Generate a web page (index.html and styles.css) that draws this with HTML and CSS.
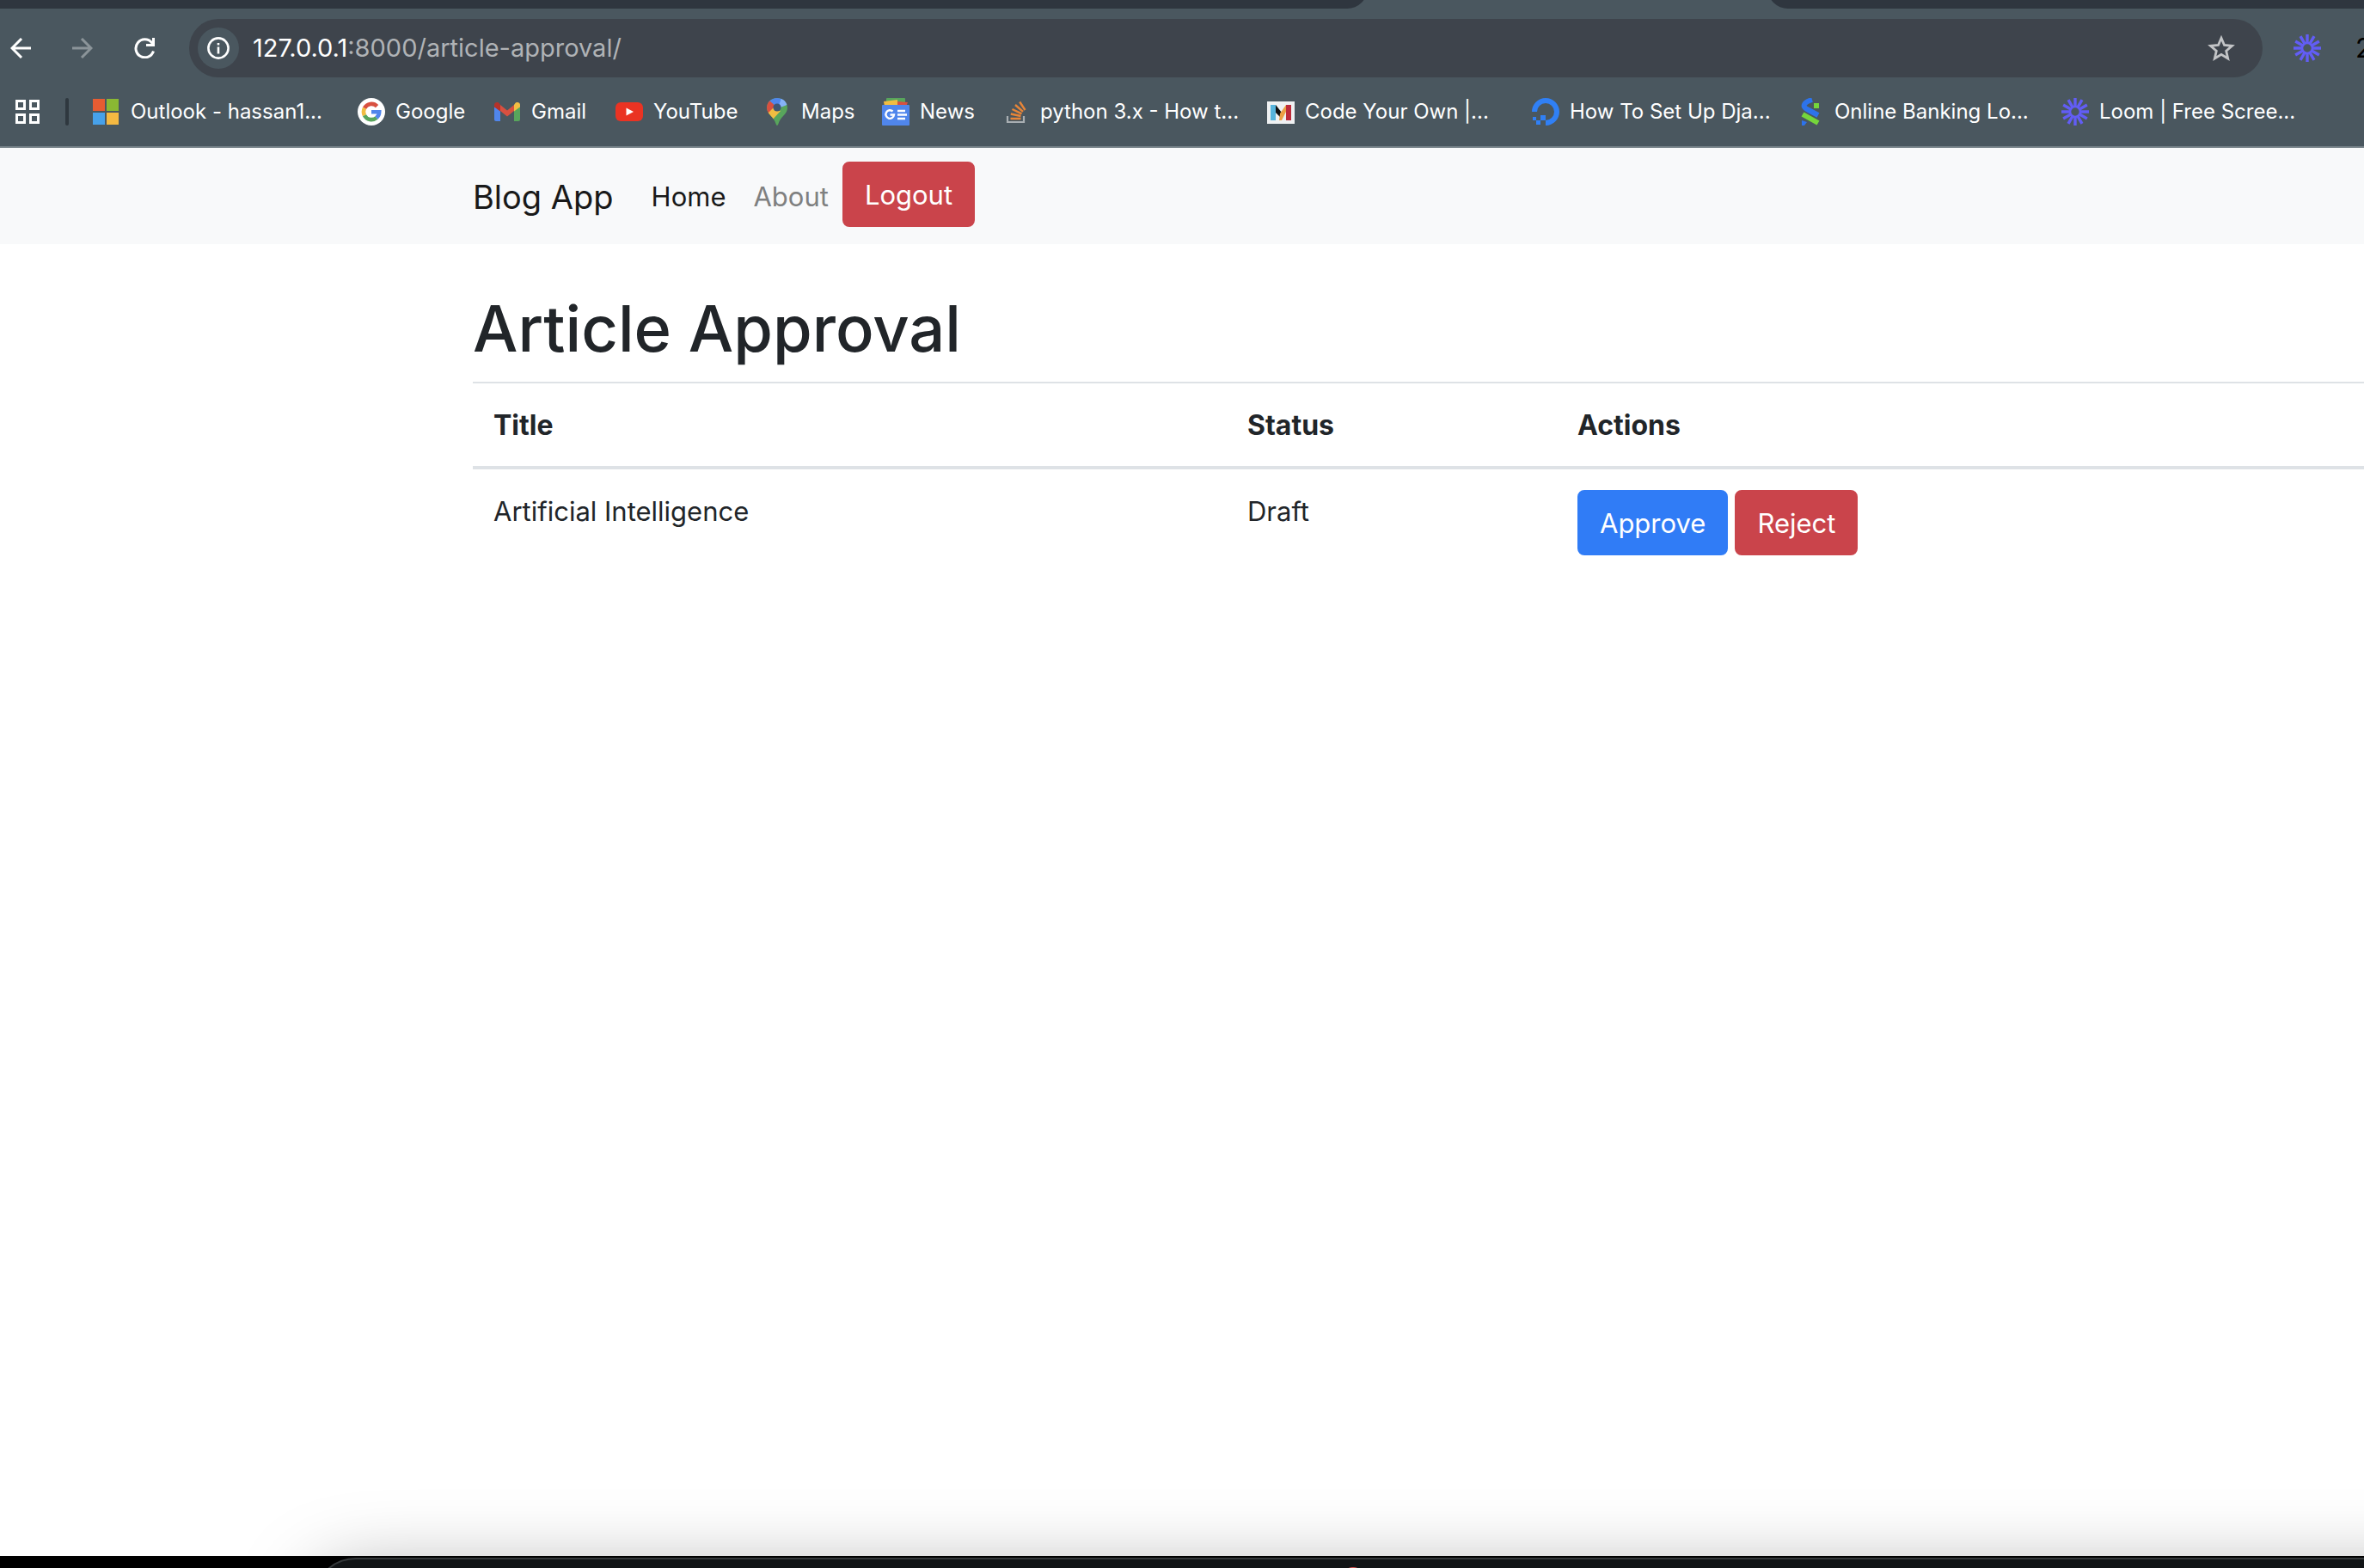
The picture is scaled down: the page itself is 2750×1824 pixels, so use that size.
FILE: index.html
```html
<!DOCTYPE html>
<html lang="en">
<head>
<meta charset="utf-8">
<title>Article Approval</title>
<link rel="stylesheet" href="styles.css">
</head>
<body>
<svg class="defs" aria-hidden="true">
  <symbol id="loom" viewBox="0 0 32 32">
    <g stroke="#625df5" stroke-width="3.4">
      <path id="ray" d="M16 0V11M16 21V32"/>
      <use href="#ray" transform="rotate(30 16 16)"/>
      <use href="#ray" transform="rotate(60 16 16)"/>
      <use href="#ray" transform="rotate(90 16 16)"/>
      <use href="#ray" transform="rotate(120 16 16)"/>
      <use href="#ray" transform="rotate(150 16 16)"/>
    </g>
    <circle cx="16" cy="16" r="6" fill="none" stroke="#625df5" stroke-width="2.6"/>
  </symbol>
</svg>
<header class="browser">
  <div class="tabs">
    <div class="tab-left"></div>
    <div></div>
    <div class="tab-right"></div>
  </div>
  <div class="toolbar">
    <div class="controls">
      <button class="tool" aria-label="Back"><svg width="24" height="24" viewBox="0 0 24 24" fill="none" stroke="#fff" stroke-width="3"><path d="M24 12H2M13 1L2 12L13 23"/></svg></button>
      <button class="tool" aria-label="Forward"><svg width="24" height="24" viewBox="0 0 24 24" fill="none" stroke="#8b9499" stroke-width="3"><path d="M0 12H22M11 1L22 12L11 23"/></svg></button>
      <button class="tool" aria-label="Reload"><svg width="24" height="24" viewBox="0 0 24 24" fill="none" stroke="#fff" stroke-width="3"><path d="M22.5 15.5A10.5 10.5 0 1 1 20.5 5.500L22 8M22.500 0V8.500H14"/></svg></button>
    </div>
    <div class="address">
      <button class="info" aria-label="View site information"><svg width="26" height="26" viewBox="0 0 26 26" fill="none" stroke="#fff"><circle cx="13" cy="13" r="11.600" stroke-width="2.600"/><path d="M13 11.500V19.500M13 7V9.400" stroke-width="2.600"/></svg></button>
      <div class="url">127.0.0.1<span class="url-path">:8000/article-approval/</span></div>
      <button class="tool" aria-label="Bookmark this page"><svg width="32" height="30" viewBox="0 0 32 30" fill="none" stroke="#c2c4c6" stroke-width="2.800"><path d="M16 3.300L19.500 11.500L28.500 12.300L21.700 18.200L23.700 27L16 22.400L8.300 27L10.300 18.200L3.500 12.300L12.500 11.500Z"/></svg></button>
    </div>
    <div class="extensions">
      <button class="tool" aria-label="Loom"><svg width="32" height="32"><use href="#loom"/></svg></button>
      <span class="count">2</span>
    </div>
  </div>
  <nav class="bookmarks" aria-label="Bookmarks">
    <button class="tool" aria-label="Apps"><svg width="28" height="28" viewBox="0 0 28 28" fill="none" stroke="#fff" stroke-width="3"><path d="M1.500 1.500H10.500V10.500H1.500ZM17.500 1.500H26.500V10.500H17.500ZM1.500 17.500H10.500V26.500H1.500ZM17.500 17.500H26.500V26.500H17.500Z"/></svg></button>
    <span class="divider"></span>
    <div class="links">
      <a href="#"><svg width="32" height="32" viewBox="0 0 32 32"><path fill="#e65c32" d="M0 1H14V15H0Z"/><path fill="#8ab833" d="M16 1H30V15H16Z"/><path fill="#47a1ea" d="M0 17H14V31H0Z"/><path fill="#f4b942" d="M16 17H30V31H16Z"/></svg>Outlook - hassan1...</a>
      <a href="#"><svg width="32" height="32" viewBox="0 0 32 32" fill="none" stroke-width="4.600"><circle cx="16" cy="16" r="16" fill="#fff"/><path stroke="#d85040" d="M8 11.800A9.200 9.200 0 0 1 22.600 9.600"/><path stroke="#f2bd42" d="M8 20.200A9.200 9.200 0 0 1 8 11.800"/><path stroke="#58a55c" d="M22 23A9.200 9.200 0 0 1 8 20.200"/><path stroke="#5086ec" d="M16 16.300H25.200A9.200 9.200 0 0 1 21.900 23"/></svg>Google</a>
      <a href="#"><svg width="32" height="32" viewBox="0 0 32 32"><path fill="#5086ec" d="M1 10L8 15V27H3Q1 27 1 25Z"/><path fill="#58a55c" d="M24 15L31 10V25Q31 27 29 27H24Z"/><path fill="#d85040" d="M8 8L16 14.500L24 8V15L16 21.500L8 15Z"/><path fill="#b5322a" d="M1 10.500V8C1 5 5 4 7 6.500L8 8V15.500Z"/><path fill="#f2bd42" d="M31 10.500V8C31 5 27 4 25 6.500L24 8V15.500Z"/></svg>Gmail</a>
      <a href="#"><svg width="32" height="32" viewBox="0 0 32 32"><rect y="5" width="32" height="22" rx="6" fill="#ea3323"/><path fill="#fff" d="M12.500 11.500L21 16L12.500 20.500Z"/></svg>YouTube</a>
      <a href="#"><svg width="32" height="32" viewBox="0 0 32 32"><defs><clipPath id="pin"><path d="M16 0C9 0 4 5 4 11.500C4 19 12.500 22 14.500 30Q16 34 17.500 30C19.500 22 28 19 28 11.500C28 5 23 0 16 0Z"/></clipPath></defs><g clip-path="url(#pin)"><path fill="#58a55c" d="M0 0H32V32H0Z"/><path fill="#5086ec" d="M6 0H28L16 14L6 5Z"/><path fill="#86b2f8" d="M21 0L30 7L25 9L17 12Z"/><path fill="#d85040" d="M0 3H7L16 11L6 19L0 16Z"/><path fill="#f2bd42" d="M12 11L20 15L9 27L4 19Z"/></g><circle cx="16" cy="11" r="4.600" fill="#3f5673"/></svg>Maps</a>
      <a href="#"><svg width="32" height="32" viewBox="0 0 32 32"><rect x="5" width="22" height="10" rx="1" fill="#58a55c"/><path fill="#f2bd42" d="M2 4L18 2V10H3Z"/><path fill="#d85040" d="M18 4L30 5L28 10H18Z"/><rect y="8" width="32" height="24" rx="1" fill="#5086ec"/><g fill="none" stroke="#fff" stroke-width="2.400"><path d="M12.500 15.500A4.800 4.800 0 1 0 14 19.500H9.500"/><path d="M18 15H27M18 19.500H29M18 24H27"/></g></svg>News</a>
      <a href="#"><svg width="32" height="32" viewBox="0 0 32 32" fill="none"><path stroke="#a8aeb2" stroke-width="2.200" d="M6 21V28H25V21"/><g stroke="#e78538" stroke-width="2.400"><path d="M9.500 24H21.500M9.800 18.500L21.500 21M11.500 13L22.500 18.300M15 8L24 15.800M20.200 4.500L26.500 14"/></g></svg>python 3.x - How t...</a>
      <a href="#"><svg width="32" height="32" viewBox="0 0 32 32"><path fill="#eff1f2" d="M0 4H32V30H0Z"/><path fill="#56b4dc" d="M4 8H10V26H4Z"/><path fill="#bd2b3a" d="M22 8H28V26H22Z"/><path fill="#111" d="M10 8L17 17L15 22L10 17Z"/><path fill="#eca044" d="M22 8V16L17 26H14L15 18Z"/></svg>Code Your Own |...</a>
      <a href="#"><svg width="32" height="32" viewBox="0 0 32 32"><path fill="none" stroke="#3080f6" stroke-width="6" d="M3 16A13 13 0 1 1 16 29"/><path fill="#3080f6" d="M10 20H16V26H10ZM5 26H10V31H5ZM1 22H5V26H1Z"/></svg>How To Set Up Dja...</a>
      <a href="#"><svg width="32" height="32" viewBox="0 0 32 32" fill="none"><path stroke="#75d63b" stroke-width="6" d="M20 9H26M7 19L25 29"/><path stroke="#2d73eb" stroke-width="6" d="M18 2C8 5 6 10 12 13L25 20"/><path fill="#2d73eb" d="M6 26L12 28L9 32H6Z"/></svg>Online Banking Lo...</a>
      <a href="#"><svg width="32" height="32"><use href="#loom"/></svg>Loom | Free Scree...</a>
    </div>
  </nav>
</header>
<div class="navbar">
  <a class="brand" href="#">Blog App</a>
  <nav class="menu">
    <a class="active" href="#">Home</a>
    <a href="#">About</a>
  </nav>
  <button class="btn danger">Logout</button>
</div>
<main class="content">
  <h1>Article Approval</h1>
  <table>
    <colgroup><col class="col-title"><col class="col-status"><col></colgroup>
    <thead>
      <tr><th scope="col">Title</th><th scope="col">Status</th><th scope="col">Actions</th></tr>
    </thead>
    <tbody>
      <tr>
        <td>Artificial Intelligence</td>
        <td>Draft</td>
        <td><div class="actions"><button class="btn primary">Approve</button><button class="btn danger">Reject</button></div></td>
      </tr>
    </tbody>
  </table>
</main>
<footer class="desktop">
  <div class="dock-area"><div class="dock"><span class="dock-badge"></span></div></div>
</footer>
</body>
</html>
```

FILE: styles.css
```css
* {
  box-sizing: border-box;
}

body {
  margin: 0;
  min-height: 100vh;
  display: flex;
  flex-direction: column;
  background: #fff;
  color: #212529;
  font: 31px/48px Inter, "Liberation Sans", sans-serif;
}

a {
  color: inherit;
  text-decoration: none;
}

button {
  font: inherit;
  margin: 0;
}

svg {
  display: block;
  flex: none;
}

.defs {
  position: absolute;
  width: 0;
  height: 0;
}

/* Browser frame */
.browser {
  background: #4a575f;
  border-bottom: 2px solid #737f86;
  color: #fff;
}

.tabs {
  display: grid;
  grid-template-columns: 1591fr 465fr 694fr;
  align-items: end;
  height: 10px;
  overflow: hidden;
}

.tab-left,
.tab-right {
  height: 10px;
  background: #2f363f;
}

.tab-left {
  clip-path: inset(-14px 0 0 round 0 0 24px 0);
}

.tab-right {
  clip-path: inset(-14px 0 0 round 0 0 0 24px);
}

.toolbar {
  display: flex;
  align-items: center;
  padding: 12px 0 0 12px;
}

.controls {
  display: flex;
  gap: 48px;
  margin-right: 40px;
}

.tool {
  padding: 0;
  border: 0;
  background: none;
}

.address {
  flex: 1;
  display: flex;
  align-items: center;
  gap: 16px;
  height: 68px;
  padding: 0 32px 0 10px;
  border-radius: 34px;
  background: #3e444c;
}

.info {
  display: grid;
  place-items: center;
  width: 48px;
  height: 48px;
  padding: 0;
  border: 0;
  border-radius: 50%;
  background: #4a575f;
}

.url {
  flex: 1;
  font-size: 29px;
}

.url-path {
  color: #b0b3b6;
}

.extensions {
  display: flex;
  align-items: center;
  justify-content: space-between;
  width: 118px;
  padding-left: 36px;
  overflow: hidden;
}

.count {
  width: 10px;
  color: #000;
}

.bookmarks {
  display: flex;
  align-items: center;
  height: 80px;
  padding-left: 18px;
  font-size: 24px;
}

.divider {
  width: 4px;
  height: 32px;
  margin: 0 28px 0 30px;
  border-radius: 2px;
  background: #2f383f;
}

.links {
  display: grid;
  grid-template-columns: 308px 158px 142px 172px 138px 140px repeat(5, 308px);
}

.links a {
  display: flex;
  align-items: center;
  gap: 12px;
  white-space: nowrap;
}

/* Blog page */
.navbar {
  display: flex;
  align-items: flex-start;
  padding: 16px 0 16px 20%;
  background: #f8f9fa;
}

.brand {
  margin-right: 28px;
  padding: 11px 0 9px;
  color: #191919;
  font-size: 38px;
  line-height: 60px;
}

.menu {
  display: flex;
}

.menu a {
  padding: 17px 16px 15px;
  color: #7f8080;
}

.menu .active {
  color: #191919;
}

.btn {
  padding: 13px 24px 11px;
  border: 2px solid transparent;
  border-radius: 8px;
  color: #fff;
}

.danger {
  background: #ca444b;
  border-color: #ca444b;
}

.primary {
  background: #307cf6;
  border-color: #307cf6;
}

.content {
  flex: 1;
  padding: 50px 0 0 20%;
}

h1 {
  margin: 0 0 14px;
  font-size: 74px;
  font-weight: 500;
  line-height: 96px;
}

table {
  width: 100%;
  table-layout: fixed;
  border-spacing: 0;
}

.col-title {
  width: 877px;
}

.col-status {
  width: 384px;
}

th,
td {
  padding: 25px 24px 23px;
  text-align: left;
  vertical-align: top;
}

th {
  border-top: 2px solid #dee2e6;
  border-bottom: 4px solid #dee2e6;
  font-size: 32px;
}

td:last-child {
  padding-top: 24px;
}

.actions {
  display: flex;
  gap: 8px;
}

/* Desktop edge below the browser window */
.desktop {
  position: relative;
  height: 14px;
  background: #000;
}

.dock-area {
  position: absolute;
  inset: auto 0 0;
  height: 174px;
  overflow: hidden;
  pointer-events: none;
}

.dock {
  position: absolute;
  top: 162px;
  left: 364px;
  right: -200px;
  height: 180px;
  border: 2px solid #35393b;
  border-radius: 50px;
  background: #111416;
  box-shadow: 0 20px 90px rgba(0, 0, 0, 0.36);
}

.dock-badge {
  position: absolute;
  top: 9px;
  left: 1194px;
  width: 28px;
  height: 28px;
  border-radius: 50%;
  background: #d9534f;
}
```
